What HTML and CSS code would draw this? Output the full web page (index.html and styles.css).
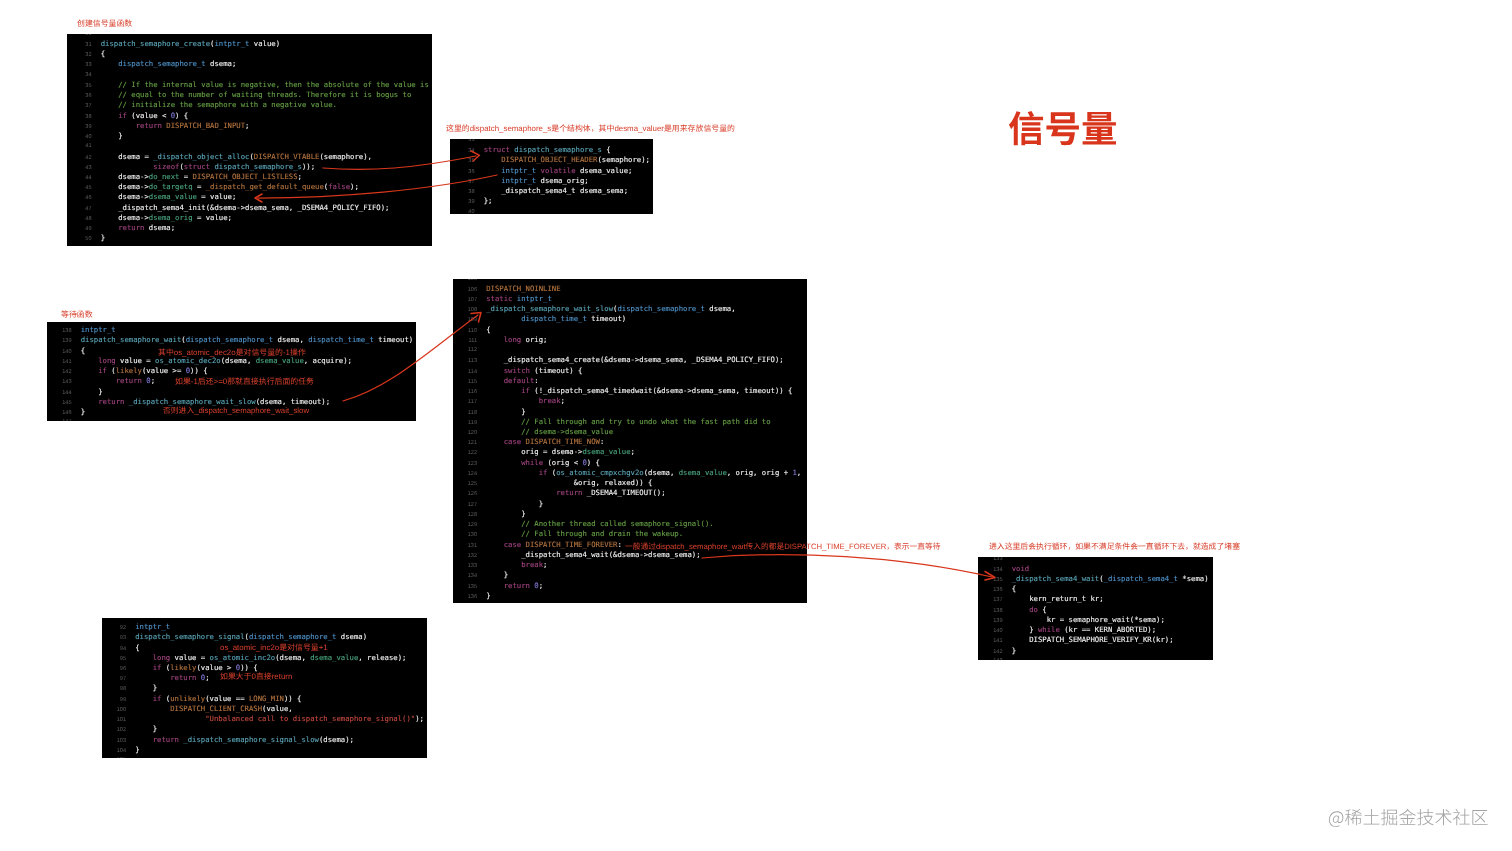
FILE: index.html
```html
<!DOCTYPE html>
<html lang="zh-CN">
<head>
<meta charset="utf-8">
<title>信号量</title>
<link rel="stylesheet" href="styles.css">
</head>
<body>
<main class="canvas">
<h1 class="title">信号量</h1>

<p class="note n-create">创建信号量函数</p>
<section class="panel p-create"><div class="code">
<div class="l"><span class="n">30</span></div>
<div class="l"><span class="n">31</span><code><span class="f">dispatch_semaphore_create</span>(<span class="t">intptr_t</span> value)</code></div>
<div class="l"><span class="n">32</span><code>{</code></div>
<div class="l"><span class="n">33</span><code>    <span class="t">dispatch_semaphore_t</span> dsema;</code></div>
<div class="l"><span class="n">34</span></div>
<div class="l"><span class="n">35</span><code><span class="c">    // If the internal value is negative, then the absolute of the value is</span></code></div>
<div class="l"><span class="n">36</span><code><span class="c">    // equal to the number of waiting threads. Therefore it is bogus to</span></code></div>
<div class="l"><span class="n">37</span><code><span class="c">    // initialize the semaphore with a negative value.</span></code></div>
<div class="l"><span class="n">38</span><code>    <span class="k">if</span> (value &lt; <span class="d">0</span>) {</code></div>
<div class="l"><span class="n">39</span><code>        <span class="k">return</span> <span class="m">DISPATCH_BAD_INPUT</span>;</code></div>
<div class="l"><span class="n">40</span><code>    }</code></div>
<div class="l"><span class="n">41</span></div>
<div class="l"><span class="n">42</span><code>    dsema = <span class="f">_dispatch_object_alloc</span>(<span class="m">DISPATCH_VTABLE</span>(semaphore),</code></div>
<div class="l"><span class="n">43</span><code>            <span class="k">sizeof</span>(<span class="k">struct</span> <span class="f">dispatch_semaphore_s</span>));</code></div>
<div class="l"><span class="n">44</span><code>    dsema-&gt;<span class="v">do_next</span> = <span class="m">DISPATCH_OBJECT_LISTLESS</span>;</code></div>
<div class="l"><span class="n">45</span><code>    dsema-&gt;<span class="v">do_targetq</span> = <span class="m">_dispatch_get_default_queue</span>(<span class="k">false</span>);</code></div>
<div class="l"><span class="n">46</span><code>    dsema-&gt;<span class="v">dsema_value</span> = value;</code></div>
<div class="l"><span class="n">47</span><code>    _dispatch_sema4_init(&amp;dsema-&gt;dsema_sema, _DSEMA4_POLICY_FIFO);</code></div>
<div class="l"><span class="n">48</span><code>    dsema-&gt;<span class="v">dsema_orig</span> = value;</code></div>
<div class="l"><span class="n">49</span><code>    <span class="k">return</span> dsema;</code></div>
<div class="l"><span class="n">50</span><code>}</code></div>
</div></section>

<p class="note n-struct">这里的dispatch_semaphore_s是个结构体，其中desma_valuer是用来存放信号量的</p>
<section class="panel p-struct"><div class="code">
<div class="l"><span class="n">33</span></div>
<div class="l"><span class="n">34</span><code><span class="k">struct</span> <span class="f">dispatch_semaphore_s</span> {</code></div>
<div class="l"><span class="n">35</span><code>    <span class="m">DISPATCH_OBJECT_HEADER</span>(semaphore);</code></div>
<div class="l"><span class="n">36</span><code>    <span class="t">intptr_t</span> <span class="k">volatile</span> dsema_value;</code></div>
<div class="l"><span class="n">37</span><code>    <span class="t">intptr_t</span> dsema_orig;</code></div>
<div class="l"><span class="n">38</span><code>    _dispatch_sema4_t dsema_sema;</code></div>
<div class="l"><span class="n">39</span><code>};</code></div>
<div class="l"><span class="n">40</span></div>
</div></section>

<p class="note n-wait">等待函数</p>
<section class="panel p-wait"><div class="code">
<div class="l"><span class="n">137</span></div>
<div class="l"><span class="n">138</span><code><span class="t">intptr_t</span></code></div>
<div class="l"><span class="n">139</span><code><span class="f">dispatch_semaphore_wait</span>(<span class="t">dispatch_semaphore_t</span> dsema, <span class="t">dispatch_time_t</span> timeout)</code></div>
<div class="l"><span class="n">140</span><code>{</code></div>
<div class="l"><span class="n">141</span><code>    <span class="k">long</span> value = <span class="f">os_atomic_dec2o</span>(dsema, <span class="v">dsema_value</span>, acquire);</code></div>
<div class="l"><span class="n">142</span><code>    <span class="k">if</span> (<span class="m">likely</span>(value &gt;= <span class="d">0</span>)) {</code></div>
<div class="l"><span class="n">143</span><code>        <span class="k">return</span> <span class="d">0</span>;</code></div>
<div class="l"><span class="n">144</span><code>    }</code></div>
<div class="l"><span class="n">145</span><code>    <span class="k">return</span> <span class="f">_dispatch_semaphore_wait_slow</span>(dsema, timeout);</code></div>
<div class="l"><span class="n">146</span><code>}</code></div>
<div class="l"><span class="n">147</span></div>
</div></section>
<p class="note n-dec">其中os_atomic_dec2o是对信号量的-1操作</p>
<p class="note n-ge">如果-1后还&gt;=0那就直接执行后面的任务</p>
<p class="note n-else">否则进入_dispatch_semaphore_wait_slow</p>

<section class="panel p-slow"><div class="code">
<div class="l"><span class="n">105</span></div>
<div class="l"><span class="n">106</span><code><span class="m">DISPATCH_NOINLINE</span></code></div>
<div class="l"><span class="n">107</span><code><span class="k">static</span> <span class="t">intptr_t</span></code></div>
<div class="l"><span class="n">108</span><code><span class="f">_dispatch_semaphore_wait_slow</span>(<span class="t">dispatch_semaphore_t</span> dsema,</code></div>
<div class="l"><span class="n">109</span><code>        <span class="t">dispatch_time_t</span> timeout)</code></div>
<div class="l"><span class="n">110</span><code>{</code></div>
<div class="l"><span class="n">111</span><code>    <span class="k">long</span> orig;</code></div>
<div class="l"><span class="n">112</span></div>
<div class="l"><span class="n">113</span><code>    _dispatch_sema4_create(&amp;dsema-&gt;dsema_sema, _DSEMA4_POLICY_FIFO);</code></div>
<div class="l"><span class="n">114</span><code>    <span class="k">switch</span> (timeout) {</code></div>
<div class="l"><span class="n">115</span><code>    <span class="k">default</span>:</code></div>
<div class="l"><span class="n">116</span><code>        <span class="k">if</span> (!_dispatch_sema4_timedwait(&amp;dsema-&gt;dsema_sema, timeout)) {</code></div>
<div class="l"><span class="n">117</span><code>            <span class="k">break</span>;</code></div>
<div class="l"><span class="n">118</span><code>        }</code></div>
<div class="l"><span class="n">119</span><code><span class="c">        // Fall through and try to undo what the fast path did to</span></code></div>
<div class="l"><span class="n">120</span><code><span class="c">        // dsema-&gt;dsema_value</span></code></div>
<div class="l"><span class="n">121</span><code>    <span class="k">case</span> <span class="m">DISPATCH_TIME_NOW</span>:</code></div>
<div class="l"><span class="n">122</span><code>        orig = dsema-&gt;<span class="v">dsema_value</span>;</code></div>
<div class="l"><span class="n">123</span><code>        <span class="k">while</span> (orig &lt; <span class="d">0</span>) {</code></div>
<div class="l"><span class="n">124</span><code>            <span class="k">if</span> (<span class="f">os_atomic_cmpxchgv2o</span>(dsema, <span class="v">dsema_value</span>, orig, orig + <span class="d">1</span>,</code></div>
<div class="l"><span class="n">125</span><code>                    &amp;orig, relaxed)) {</code></div>
<div class="l"><span class="n">126</span><code>                <span class="k">return</span> _DSEMA4_TIMEOUT();</code></div>
<div class="l"><span class="n">127</span><code>            }</code></div>
<div class="l"><span class="n">128</span><code>        }</code></div>
<div class="l"><span class="n">129</span><code><span class="c">        // Another thread called semaphore_signal().</span></code></div>
<div class="l"><span class="n">130</span><code><span class="c">        // Fall through and drain the wakeup.</span></code></div>
<div class="l"><span class="n">131</span><code>    <span class="k">case</span> <span class="m">DISPATCH_TIME_FOREVER</span>:</code></div>
<div class="l"><span class="n">132</span><code>        _dispatch_sema4_wait(&amp;dsema-&gt;dsema_sema);</code></div>
<div class="l"><span class="n">133</span><code>        <span class="k">break</span>;</code></div>
<div class="l"><span class="n">134</span><code>    }</code></div>
<div class="l"><span class="n">135</span><code>    <span class="k">return</span> <span class="d">0</span>;</code></div>
<div class="l"><span class="n">136</span><code>}</code></div>
</div></section>
<p class="note n-forever">一般通过dispatch_semaphore_wait传入的都是DISPATCH_TIME_FOREVER，表示一直等待</p>

<p class="note n-loop">进入这里后会执行循环，如果不满足条件会一直循环下去，就造成了堵塞</p>
<section class="panel p-sema"><div class="code">
<div class="l"><span class="n">133</span></div>
<div class="l"><span class="n">134</span><code><span class="k">void</span></code></div>
<div class="l"><span class="n">135</span><code><span class="f">_dispatch_sema4_wait</span>(<span class="t">_dispatch_sema4_t</span> *sema)</code></div>
<div class="l"><span class="n">136</span><code>{</code></div>
<div class="l"><span class="n">137</span><code>    kern_return_t kr;</code></div>
<div class="l"><span class="n">138</span><code>    <span class="k">do</span> {</code></div>
<div class="l"><span class="n">139</span><code>        kr = semaphore_wait(*sema);</code></div>
<div class="l"><span class="n">140</span><code>    } <span class="k">while</span> (kr == KERN_ABORTED);</code></div>
<div class="l"><span class="n">141</span><code>    DISPATCH_SEMAPHORE_VERIFY_KR(kr);</code></div>
<div class="l"><span class="n">142</span><code>}</code></div>
<div class="l"><span class="n">143</span></div>
</div></section>

<section class="panel p-signal"><div class="code">
<div class="l"><span class="n">91</span></div>
<div class="l"><span class="n">92</span><code><span class="t">intptr_t</span></code></div>
<div class="l"><span class="n">93</span><code><span class="f">dispatch_semaphore_signal</span>(<span class="t">dispatch_semaphore_t</span> dsema)</code></div>
<div class="l"><span class="n">94</span><code>{</code></div>
<div class="l"><span class="n">95</span><code>    <span class="k">long</span> value = <span class="f">os_atomic_inc2o</span>(dsema, <span class="v">dsema_value</span>, release);</code></div>
<div class="l"><span class="n">96</span><code>    <span class="k">if</span> (<span class="m">likely</span>(value &gt; <span class="d">0</span>)) {</code></div>
<div class="l"><span class="n">97</span><code>        <span class="k">return</span> <span class="d">0</span>;</code></div>
<div class="l"><span class="n">98</span><code>    }</code></div>
<div class="l"><span class="n">99</span><code>    <span class="k">if</span> (<span class="m">unlikely</span>(value == <span class="m">LONG_MIN</span>)) {</code></div>
<div class="l"><span class="n">100</span><code>        <span class="m">DISPATCH_CLIENT_CRASH</span>(value,</code></div>
<div class="l"><span class="n">101</span><code>                <span class="s">"Unbalanced call to dispatch_semaphore_signal()"</span>);</code></div>
<div class="l"><span class="n">102</span><code>    }</code></div>
<div class="l"><span class="n">103</span><code>    <span class="k">return</span> <span class="f">_dispatch_semaphore_signal_slow</span>(dsema);</code></div>
<div class="l"><span class="n">104</span><code>}</code></div>
<div class="l"><span class="n">105</span></div>
</div></section>
<p class="note n-inc">os_atomic_inc2o是对信号量+1</p>
<p class="note n-ret">如果大于0直接return</p>

<svg class="arrows" viewBox="0 0 1512 851" width="1512" height="851" aria-hidden="true">
  <g class="arrow-line">
    <path d="M323 168 C370 172 415 168 476 156"/>
    <path d="M497 175 C430 190 340 198 258 198"/>
    <path d="M343 401 C390 388 430 350 478 315"/>
    <path d="M702 558 C790 550 900 556 992 577"/>
  </g>
  <g class="arrow-head">
    <path d="M471 151 L479.500 155.300 L473 161"/>
    <path d="M262 194 L255 198 L262 202"/>
    <path d="M471 313.500 L481 312.500 L478.500 322"/>
    <path d="M985 571.500 L995 577.500 L985 580"/>
  </g>
</svg>

<p class="mark">@稀土掘金技术社区</p>
</main>
</body>
</html>
```

FILE: styles.css
```css
html, body {
  margin: 0;
  background: #fff;
}

body {
  overflow: hidden;
}

.canvas {
  position: relative;
  width: 1512px;
  height: 851px;
  overflow: hidden;
  filter: blur(0.3px);
  font-family: "Liberation Sans", "Noto Sans CJK SC", sans-serif;
  text-rendering: geometricPrecision;
}

.title {
  position: absolute;
  left: 1008px;
  top: 101px;
  margin: 0;
  font-family: "Noto Sans CJK SC", sans-serif;
  font-size: 36.5px;
  line-height: 52px;
  font-weight: 700;
  color: #d9351c;
}

.note {
  position: absolute;
  margin: 0;
  font-size: 7.9px;
  line-height: 12px;
  color: #d8402c;
  white-space: nowrap;
}

.n-create  { left: 77px;  top: 18px; }
.n-struct  { left: 446px; top: 123px; }
.n-wait    { left: 61px;  top: 309px; }
.n-dec     { left: 158px; top: 347px; }
.n-ge      { left: 175px; top: 376px; }
.n-else    { left: 163px; top: 405px; font-size: 7.8px; }
.n-forever { left: 625px; top: 541px; font-size: 7.72px; }
.n-loop    { left: 989px; top: 541px; font-size: 7.85px; }
.n-inc     { left: 220px; top: 642px; }
.n-ret     { left: 220px; top: 671px; }

.panel {
  position: absolute;
  overflow: hidden;
  background: #000;
}

.p-create { left: 67px;  top: 34px;  width: 365px; height: 212px; }
.p-struct { left: 450px; top: 139px; width: 203px; height: 75px; }
.p-wait   { left: 47px;  top: 322px; width: 369px; height: 99px; }
.p-slow   { left: 453px; top: 279px; width: 354px; height: 324px; }
.p-sema   { left: 978px; top: 557px; width: 235px; height: 103px; }
.p-signal { left: 102px; top: 618px; width: 325px; height: 140px; }

.p-create .code { margin: -5.3px 0 0 0.5px; }
.p-struct .code { margin: -4.1px 0 0 0.5px; }
.p-wait .code   { margin: -7.1px 0 0 0.5px; }
.p-slow .code   { margin: -5.5px 0 0 0; }
.p-sema .code   { margin: -3.5px 0 0 0.5px; }
.p-signal .code { margin: -6.2px 0 0 0; }

.l {
  display: flex;
  align-items: baseline;
  height: 10.24px;
  line-height: 10.24px;
}

.n {
  flex: none;
  width: 24px;
  margin-right: 9.2px;
  font-family: "Liberation Sans", sans-serif;
  font-size: 5.6px;
  text-align: right;
  color: #5c5c60;
}

code {
  font-family: "DejaVu Sans Mono", monospace;
  font-size: 7.28px;
  white-space: pre;
  color: #f2f2f2;
  -webkit-text-stroke: 0.12px currentColor;
}

.k { color: #a0437f; }
.t { color: #4f93c9; }
.f { color: #5aa6b8; }
.v { color: #49a37e; }
.m { color: #b5743f; }
.c { color: #659f45; }
.d { color: #7f78d2; }
.s { color: #c4483f; }

.arrows {
  position: absolute;
  left: 0;
  top: 0;
  pointer-events: none;
}

.arrow-line path,
.arrow-head path {
  fill: none;
  stroke: #d8371c;
  stroke-width: 1.25;
  stroke-linecap: round;
  stroke-linejoin: round;
}

.arrow-head path {
  stroke-width: 1.5;
}

.mark {
  position: absolute;
  left: 1328px;
  top: 804px;
  margin: 0;
  font-family: "Noto Sans CJK SC", sans-serif;
  font-size: 18px;
  line-height: 26px;
  font-weight: 300;
  color: #a3a3a3;
  white-space: nowrap;
}
```
